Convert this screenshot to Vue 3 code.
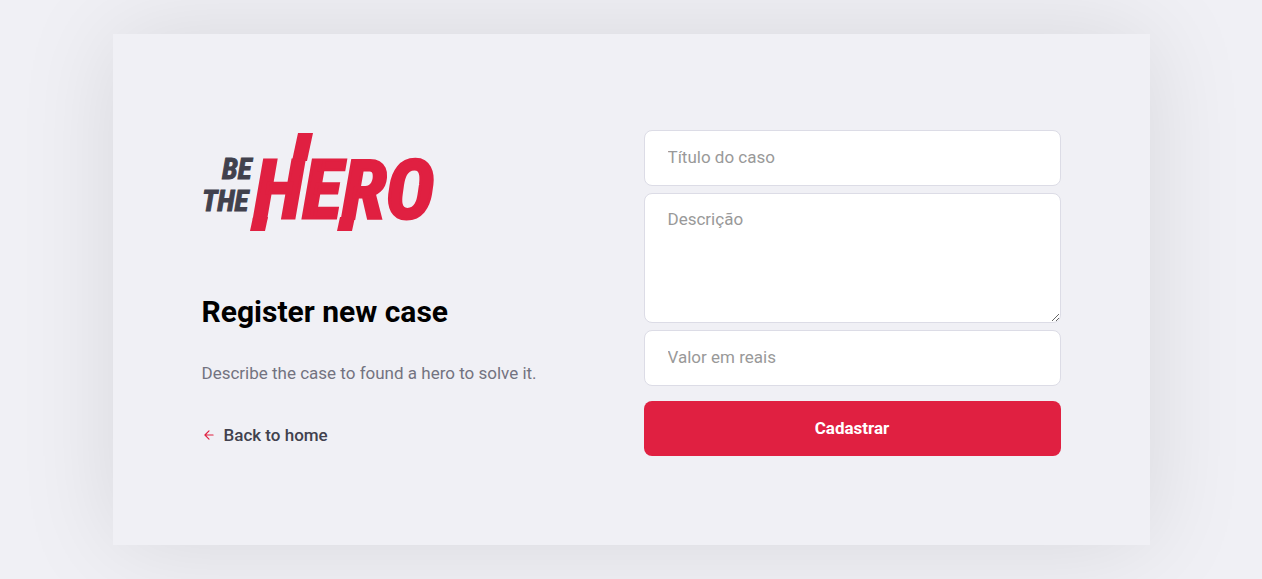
<script setup>
import { ref } from 'vue'

const title = ref('')
const description = ref('')
const value = ref('')
</script>

<template>
  <main class="page">
    <div class="card">
      <section class="intro">
        <svg class="logo" viewBox="0 0 232 98" role="img" aria-label="Be The Hero">
          <g class="logo-slashes">
            <path d="M96 0H111L105 28H90Z" />
            <path d="M51 84H66L63 98H48Z" />
            <path d="M138 84H153L150 98H135Z" />
          </g>
          <text class="logo-small" x="20" y="46">BE</text>
          <text class="logo-small" x="0" y="78">THE</text>
          <text class="logo-large" x="52" y="85">HERO</text>
        </svg>
        <h1>Register new case</h1>
        <p>Describe the case to found a hero to solve it.</p>
        <a class="back" href="#">
          <svg class="arrow" viewBox="0 0 24 24" aria-hidden="true">
            <path d="M19 12H5M12 19L5 12L12 5" />
          </svg>
          Back to home
        </a>
      </section>

      <form class="form" @submit.prevent>
        <input v-model="title" type="text" placeholder="Título do caso" aria-label="Título do caso" />
        <textarea v-model="description" placeholder="Descrição" aria-label="Descrição"></textarea>
        <input v-model="value" type="text" placeholder="Valor em reais" aria-label="Valor em reais" />
        <button type="submit">Cadastrar</button>
      </form>
    </div>
  </main>
</template>

<style>
body {
  background: #f0f0f5;
}
</style>

<style scoped>
* {
  box-sizing: border-box;
}

.page {
  min-height: 100vh;
  padding: 32px;
  display: flex;
  align-items: center;
  justify-content: center;
  overflow: hidden;
  background: #f0f0f5;
  font-family: Roboto, "Liberation Sans", sans-serif;
}

.card {
  width: 100%;
  max-width: 1037px;
  padding: 96px 89px 89px;
  display: flex;
  align-items: center;
  justify-content: space-between;
  gap: 32px;
  background: #f0f0f5;
  box-shadow: 0 0 93px rgba(0, 0, 0, 0.1);
}

.intro {
  flex: 0 1 352px;
  padding-bottom: 8px;
}

.logo {
  display: block;
  width: 232px;
  height: 98px;
  overflow: visible;
}

.logo text {
  font-family: "Liberation Sans Narrow", "Roboto Condensed", "Liberation Sans", sans-serif;
  font-style: italic;
  font-weight: 700;
}

.logo-small {
  fill: #41414d;
  stroke: #41414d;
  stroke-width: 1px;
  font-size: 29px;
}

.logo-large {
  fill: #e02041;
  stroke: #e02041;
  stroke-width: 3px;
  font-size: 82px;
}

.logo-slashes {
  fill: #e02041;
}

h1 {
  margin: 61px 0 26px;
  font-size: 30px;
  line-height: 40px;
  font-weight: 700;
  color: #000;
}

p {
  margin: 0;
  font-size: 17px;
  line-height: 30px;
  color: #737380;
}

.back {
  margin-top: 36px;
  display: flex;
  align-items: center;
  gap: 8px;
  color: #41414d;
  font-size: 17px;
  line-height: 22px;
  font-weight: 500;
  text-decoration: none;
}

.arrow {
  width: 14px;
  height: 14px;
  fill: none;
  stroke: #e02041;
  stroke-width: 2;
  stroke-linecap: round;
  stroke-linejoin: round;
}

.form {
  flex: 0 1 417px;
  display: flex;
  flex-direction: column;
  gap: 7px;
}

input,
textarea {
  width: 100%;
  height: 56px;
  margin: 0;
  padding: 0 23px 2px;
  border: 1px solid #dcdce6;
  border-radius: 8px;
  background: #fff;
  color: #333;
  font-family: inherit;
  font-size: 17px;
}

textarea {
  display: block;
  height: 130px;
  padding: 14px 23px;
  line-height: 22px;
  resize: vertical;
}

input::placeholder,
textarea::placeholder {
  color: #999;
}

button {
  width: 100%;
  height: 55px;
  margin-top: 8px;
  padding: 0 0 2px;
  border: 0;
  border-radius: 8px;
  background: #e02041;
  color: #fff;
  font-family: inherit;
  font-size: 17px;
  font-weight: 700;
  cursor: pointer;
}
</style>
